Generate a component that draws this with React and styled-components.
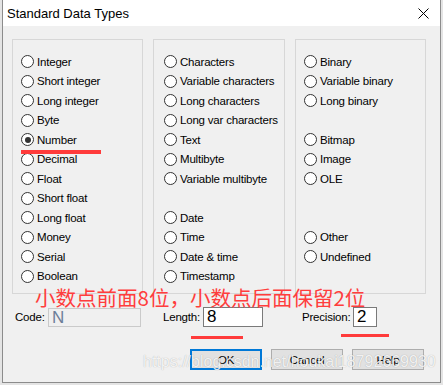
import React from 'react';
import styled, { createGlobalStyle } from 'styled-components';

const GlobalStyle = createGlobalStyle`
  html, body {
    margin: 0;
    padding: 0;
    background: #e4e4e4;
  }
  body {
    font-family: "Liberation Sans", Arial, sans-serif;
    font-size: 11.5px;
    letter-spacing: -0.2px;
    color: #000;
  }
`;

const Screen = styled.div`
  position: relative;
  width: 443px;
  height: 385px;
  overflow: hidden;
`;

const Dialog = styled.div`
  margin-left: 2px;
  width: 437px;
  height: 382px;
  background: #f0f0f0;
  border: 1px solid #8c8c8c;
  border-top: none;
  display: flex;
  flex-direction: column;
`;

const TitleBar = styled.div`
  height: 26px;
  flex-shrink: 0;
  background: #fff;
  display: flex;
  align-items: center;
  justify-content: space-between;
  padding: 0 11px 0 4px;
  font-size: 13px;
  letter-spacing: 0;
`;

const Body = styled.div`
  padding: 13px 0 0 9px;
`;

const GroupRow = styled.div`
  display: flex;
  gap: 10px;
`;

const Group = styled.div`
  width: ${p => p.$width}px;
  height: 255px;
  box-sizing: border-box;
  border: 1px solid #d7d7d7;
  padding: 12px 0 0 ${p => p.$inset}px;
`;

const RadioRow = styled.div`
  height: 19.5px;
  display: flex;
  align-items: center;
  gap: 3px;
  white-space: nowrap;
`;

const RadioCircle = styled.span`
  width: 11px;
  height: 11px;
  flex-shrink: 0;
  border: 1px solid #333;
  border-radius: 50%;
  background: #fff;
  display: flex;
  align-items: center;
  justify-content: center;

  &::after {
    content: '';
    width: 6px;
    height: 6px;
    border-radius: 50%;
    background: ${p => (p.$checked ? '#333' : 'transparent')};
  }
`;

const FieldRow = styled.div`
  display: flex;
  align-items: center;
  margin-top: 13px;
  padding-left: 3px;
  height: 20px;
`;

const FieldLabel = styled.span`
  margin-left: ${p => p.$offset}px;
  width: ${p => p.$width}px;
`;

const FieldBox = styled.div`
  width: ${p => p.$width}px;
  height: ${p => (p.$muted ? 19 : 20)}px;
  box-sizing: border-box;
  border: 1px solid ${p => (p.$muted ? '#cacaca' : '#7a7a7a')};
  background: ${p => (p.$muted ? '#f0f0f0' : '#fff')};
  color: ${p => (p.$muted ? '#6c7e99' : '#000')};
  font-size: 17px;
  letter-spacing: 0;
  line-height: 18px;
  padding-left: 3px;
`;

const ButtonRow = styled.div`
  display: flex;
  gap: 9px;
  margin-top: 22px;
  padding-left: 178px;
`;

const Button = styled.button`
  width: 72px;
  height: 21px;
  box-sizing: border-box;
  padding: 0;
  background: #e1e1e1;
  border: ${p => (p.$primary ? '2px solid #0078d7' : '1px solid #adadad')};
  font-family: inherit;
  font-size: 11.5px;
  letter-spacing: inherit;
  color: #000;
`;

const Note = styled.div`
  position: absolute;
  left: 35px;
  top: 287px;
  font-family: "Noto Sans CJK SC", sans-serif;
  font-size: 20.5px;
  line-height: 20px;
  letter-spacing: 0;
  color: #ff3d3d;
  white-space: nowrap;
`;

const Mark = styled.div`
  position: absolute;
  background: #ff3b3b;
`;

const Watermark = styled.div`
  position: absolute;
  left: 143px;
  top: 353px;
  font-size: 16px;
  line-height: 18px;
  letter-spacing: 0;
  color: rgba(255, 255, 255, 0.85);
  text-shadow: 0 0 1px rgba(0, 0, 0, 0.3);
  white-space: nowrap;
  pointer-events: none;
`;

const columns = [
  {
    width: 131,
    inset: 8,
    items: ['Integer', 'Short integer', 'Long integer', 'Byte', 'Number', 'Decimal', 'Float', 'Short float', 'Long float', 'Money', 'Serial', 'Boolean'],
  },
  {
    width: 132,
    inset: 10,
    items: ['Characters', 'Variable characters', 'Long characters', 'Long var characters', 'Text', 'Multibyte', 'Variable multibyte', null, 'Date', 'Time', 'Date & time', 'Timestamp'],
  },
  {
    width: 131,
    inset: 8,
    items: ['Binary', 'Variable binary', 'Long binary', null, 'Bitmap', 'Image', 'OLE', null, null, 'Other', 'Undefined', null],
  },
];

function CloseIcon() {
  return (
    <svg width="11" height="11" viewBox="0 0 11 11">
      <path d="M0.5 0.5 L10.5 10.5 M10.5 0.5 L0.5 10.5" stroke="#000" strokeWidth="1" />
    </svg>
  );
}

export default function App() {
  return (
    <Screen>
      <GlobalStyle />
      <Dialog>
        <TitleBar>
          <span>Standard Data Types</span>
          <CloseIcon />
        </TitleBar>
        <Body>
          <GroupRow>
            {columns.map((col, i) => (
              <Group key={i} $width={col.width} $inset={col.inset}>
                {col.items.map((label, j) => (
                  <RadioRow key={j}>
                    {label && <RadioCircle $checked={label === 'Number'} />}
                    {label}
                  </RadioRow>
                ))}
              </Group>
            ))}
          </GroupRow>
          <FieldRow>
            <FieldLabel $offset={0} $width={33}>Code:</FieldLabel>
            <FieldBox $width={93} $muted>N</FieldBox>
            <FieldLabel $offset={22} $width={40}>Length:</FieldLabel>
            <FieldBox $width={60}>8</FieldBox>
            <FieldLabel $offset={39} $width={51}>Precision:</FieldLabel>
            <FieldBox $width={24}>2</FieldBox>
          </FieldRow>
          <ButtonRow>
            <Button $primary>OK</Button>
            <Button>Cancel</Button>
            <Button>Help</Button>
          </ButtonRow>
        </Body>
      </Dialog>
      <Mark style={{ left: 21, top: 150, width: 80, height: 4 }} />
      <Mark style={{ left: 191, top: 336, width: 52, height: 3 }} />
      <Mark style={{ left: 341, top: 334, width: 48, height: 3 }} />
      <Note>小数点前面8位，小数点后面保留2位</Note>
      <Watermark>https://blog.csdn.net/houkai18792669930</Watermark>
    </Screen>
  );
}
